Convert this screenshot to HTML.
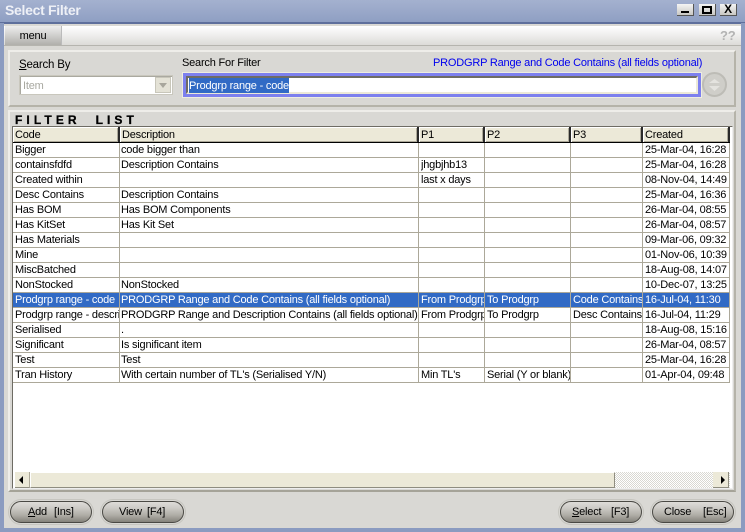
<!DOCTYPE html>
<html><head><meta charset="utf-8"><style>
*{box-sizing:border-box}
html,body{margin:0;padding:0;width:745px;height:532px;overflow:hidden;background:#d9d8d4}
body{position:relative;font-family:"Liberation Sans",sans-serif;font-size:11px;color:#000;letter-spacing:-.2px}
.a{position:absolute;white-space:nowrap}
.t{position:absolute;white-space:nowrap;overflow:hidden;height:15px;line-height:15px;transform:translateY(1px)}
.h{position:absolute;top:127px;height:15px;background:#ece9d8;border-right:2px solid #2a2a2a;box-shadow:inset 1px 1px 0 #fff,inset -1px -1px 0 #aca899;line-height:17px;padding-left:2px;white-space:nowrap;overflow:hidden}
.v{position:absolute;top:143px;height:240px;width:1px;background:#aca899}
.l{position:absolute;left:13px;width:716px;height:1px;background:#aca899}
.btn{position:absolute;top:501px;height:22px;border-radius:11px;border:1px solid #4a4944;background:linear-gradient(#dedcd8 0,#cdcbc6 30%,#b0aea7 65%,#85827b 100%);box-shadow:0 0 0 1px #d9d8d4,0 0 0 2px #c6c5bf;line-height:20px;white-space:pre}
.btn span{position:absolute;top:0}
.wb{position:absolute;top:4px;height:12px;width:17px;background:linear-gradient(#f4f4f4,#c9c8c4);border-right:1px solid #555;border-bottom:1px solid #555}
</style></head><body>
<div class="a" style="left:0;top:0;width:745px;height:532px;background:#8b9bc0"></div>
<div class="a" style="left:0;top:0;width:745px;height:22px;background:linear-gradient(#a4b1cf,#8f9fc3)"></div>
<div class="a" style="left:0;top:22px;width:745px;height:1px;background:#5e6f9c"></div>
<div class="a" style="left:4px;top:23px;width:737px;height:1px;background:#5e6f9c"></div>
<div class="a" style="left:5px;top:3px;font-size:14px;font-weight:bold;color:#eef0f6;line-height:15px;letter-spacing:-.3px">Select Filter</div>
<div class="wb" style="left:677px"><div class="a" style="left:4px;top:7px;width:8px;height:2px;background:#000"></div></div>
<div class="wb" style="left:699px"><div class="a" style="left:3px;top:2px;width:10px;height:8px;border:2px solid #000;border-top-width:2px"></div></div>
<div class="wb" style="left:720px;font-weight:bold;font-size:12px;line-height:11px;text-align:center">X</div>

<div class="a" style="left:4px;top:24px;width:737px;height:504px;background:#d9d8d4"></div>
<div class="a" style="left:4px;top:26px;width:737px;height:20px;background:linear-gradient(#fff,#dcdbd8);border-bottom:1px solid #b5b4ae"></div>
<div class="a" style="left:5px;top:26px;width:57px;height:19px;background:linear-gradient(#eee,#b0afab);text-align:center;line-height:20px;border-right:1px solid #bbb">menu</div>
<div class="a" style="left:720px;top:27px;font-size:13px;font-weight:bold;color:#b3b3b3;line-height:17px">??</div>

<div class="a" style="left:8px;top:50px;width:728px;height:57px;border:2px solid #eeede9;border-right-color:#b5b3a9;border-bottom-color:#b5b3a9"></div>
<div class="a" style="left:19px;top:58px;line-height:14px;font-size:11.5px"><u>S</u>earch By</div>
<div class="a" style="left:19px;top:75px;width:154px;height:20px;background:#fff;border:1px solid #c9c7bd;box-shadow:inset 1px 1px 0 #aaa9a0;color:#a8a8a0;padding-left:3px;line-height:20px">Item</div>
<div class="a" style="left:155px;top:77px;width:16px;height:16px;background:#e4e2d6;border:1px solid #c8c6ba"><div class="a" style="left:3px;top:5px;width:0;height:0;border:4px solid transparent;border-top:5px solid #a8a69c;border-bottom:0"></div></div>
<div class="a" style="left:182px;top:56px;line-height:14px">Search For Filter</div>
<div class="a" style="left:433px;top:56px;line-height:14px;color:#0000ee">PRODGRP Range and Code Contains (all fields optional)</div>
<div class="a" style="left:183px;top:73px;width:518px;height:24px;background:#fff;border:3px solid #7d80ee;outline:1px solid #eeede0"></div>
<div class="a" style="left:186px;top:76px;width:512px;height:18px;background:#fff;border-top:2px solid #6e6c64;border-left:2px solid #6e6c64;border-right:2px solid #ece9d8;border-bottom:2px solid #ece9d8"></div>
<div class="a" style="left:189px;top:78px;width:100px;height:15px;background:#316ac5;color:#fff;line-height:16px">Prodgrp range - code</div>
<div class="a" style="left:702px;top:72px;width:25px;height:25px;border-radius:50%;background:#cfcec9;border:2px solid #bdbcb6"></div>
<svg class="a" style="left:702px;top:72px" width="25" height="25"><path d="M7 11 L12.5 7 L18 11Z M7 14 L12.5 19 L18 14Z" fill="#e4e3df"/></svg>

<div class="a" style="left:8px;top:110px;width:728px;height:382px;border:2px solid #eeede9;border-right-color:#b5b3a9;border-bottom-color:#a5a398"></div>
<div class="a" style="left:15px;top:113px;font-size:12px;font-weight:bold;letter-spacing:4.1px;line-height:14px;white-space:pre;-webkit-text-stroke:.3px #000">FILTER  LIST</div>

<div class="a" style="left:12px;top:126px;width:721px;height:363px;background:#fff;border:1px solid #6e6c64;border-right-color:#eee;border-bottom-color:#eee"></div>
<div class="h" style="left:13px;width:107px">Code</div>
<div class="h" style="left:120px;width:299px">Description</div>
<div class="h" style="left:419px;width:66px">P1</div>
<div class="h" style="left:485px;width:86px">P2</div>
<div class="h" style="left:571px;width:72px">P3</div>
<div class="h" style="left:643px;width:87px">Created</div>
<div class="a" style="left:13px;top:142px;width:717px;height:1px;background:#000"></div>

<div class="a" style="left:13px;top:293px;width:717px;height:15px;background:#316ac5"></div>
<div class="v" style="left:119px"></div><div class="v" style="left:418px"></div><div class="v" style="left:484px"></div><div class="v" style="left:570px"></div><div class="v" style="left:642px"></div><div class="v" style="left:729px"></div>
<div class="l" style="top:157px"></div><div class="l" style="top:172px"></div><div class="l" style="top:187px"></div><div class="l" style="top:202px"></div><div class="l" style="top:217px"></div><div class="l" style="top:232px"></div><div class="l" style="top:247px"></div><div class="l" style="top:262px"></div><div class="l" style="top:277px"></div><div class="l" style="top:292px"></div><div class="l" style="top:307px"></div><div class="l" style="top:322px"></div><div class="l" style="top:337px"></div><div class="l" style="top:352px"></div><div class="l" style="top:367px"></div><div class="l" style="top:382px"></div>

<div class="t" style="left:15px;top:142px;width:104px">Bigger</div><div class="t" style="left:121px;top:142px;width:297px">code bigger than</div><div class="t" style="left:645px;top:142px;width:84px">25-Mar-04, 16:28</div>
<div class="t" style="left:15px;top:157px;width:104px">containsfdfd</div><div class="t" style="left:121px;top:157px;width:297px">Description Contains</div><div class="t" style="left:421px;top:157px;width:63px">jhgbjhb13</div><div class="t" style="left:645px;top:157px;width:84px">25-Mar-04, 16:28</div>
<div class="t" style="left:15px;top:172px;width:104px">Created within</div><div class="t" style="left:421px;top:172px;width:63px">last x days</div><div class="t" style="left:645px;top:172px;width:84px">08-Nov-04, 14:49</div>
<div class="t" style="left:15px;top:187px;width:104px">Desc Contains</div><div class="t" style="left:121px;top:187px;width:297px">Description Contains</div><div class="t" style="left:645px;top:187px;width:84px">25-Mar-04, 16:36</div>
<div class="t" style="left:15px;top:202px;width:104px">Has BOM</div><div class="t" style="left:121px;top:202px;width:297px">Has BOM Components</div><div class="t" style="left:645px;top:202px;width:84px">26-Mar-04, 08:55</div>
<div class="t" style="left:15px;top:217px;width:104px">Has KitSet</div><div class="t" style="left:121px;top:217px;width:297px">Has Kit Set</div><div class="t" style="left:645px;top:217px;width:84px">26-Mar-04, 08:57</div>
<div class="t" style="left:15px;top:232px;width:104px">Has Materials</div><div class="t" style="left:645px;top:232px;width:84px">09-Mar-06, 09:32</div>
<div class="t" style="left:15px;top:247px;width:104px">Mine</div><div class="t" style="left:645px;top:247px;width:84px">01-Nov-06, 10:39</div>
<div class="t" style="left:15px;top:262px;width:104px">MiscBatched</div><div class="t" style="left:645px;top:262px;width:84px">18-Aug-08, 14:07</div>
<div class="t" style="left:15px;top:277px;width:104px">NonStocked</div><div class="t" style="left:121px;top:277px;width:297px">NonStocked</div><div class="t" style="left:645px;top:277px;width:84px">10-Dec-07, 13:25</div>
<div style="color:#fff"><div class="t" style="left:15px;top:292px;width:104px">Prodgrp range - code</div><div class="t" style="left:121px;top:292px;width:297px">PRODGRP Range and Code Contains (all fields optional)</div><div class="t" style="left:421px;top:292px;width:63px">From Prodgrp</div><div class="t" style="left:487px;top:292px;width:83px">To Prodgrp</div><div class="t" style="left:573px;top:292px;width:69px">Code Contains</div><div class="t" style="left:645px;top:292px;width:84px">16-Jul-04, 11:30</div></div>
<div class="t" style="left:15px;top:307px;width:104px">Prodgrp range - description</div><div class="t" style="left:121px;top:307px;width:297px">PRODGRP Range and Description Contains (all fields optional)</div><div class="t" style="left:421px;top:307px;width:63px">From Prodgrp</div><div class="t" style="left:487px;top:307px;width:83px">To Prodgrp</div><div class="t" style="left:573px;top:307px;width:69px">Desc Contains</div><div class="t" style="left:645px;top:307px;width:84px">16-Jul-04, 11:29</div>
<div class="t" style="left:15px;top:322px;width:104px">Serialised</div><div class="t" style="left:121px;top:322px;width:297px">.</div><div class="t" style="left:645px;top:322px;width:84px">18-Aug-08, 15:16</div>
<div class="t" style="left:15px;top:337px;width:104px">Significant</div><div class="t" style="left:121px;top:337px;width:297px">Is significant item</div><div class="t" style="left:645px;top:337px;width:84px">26-Mar-04, 08:57</div>
<div class="t" style="left:15px;top:352px;width:104px">Test</div><div class="t" style="left:121px;top:352px;width:297px">Test</div><div class="t" style="left:645px;top:352px;width:84px">25-Mar-04, 16:28</div>
<div class="t" style="left:15px;top:367px;width:104px">Tran History</div><div class="t" style="left:121px;top:367px;width:297px">With certain number of TL's (Serialised Y/N)</div><div class="t" style="left:421px;top:367px;width:63px">Min TL's</div><div class="t" style="left:487px;top:367px;width:83px">Serial (Y or blank)</div><div class="t" style="left:645px;top:367px;width:84px">01-Apr-04, 09:48</div>

<div class="a" style="left:15px;top:472px;width:715px;height:16px;background:repeating-conic-gradient(#d9d8d2 0 25%,#fff 0 50%) 0 0/2px 2px"></div>
<div class="a" style="left:15px;top:472px;width:15px;height:16px;background:#ece9d8;border-right:1px solid #aca899;border-bottom:1px solid #8f8d80"></div>
<div class="a" style="left:19px;top:476px;width:0;height:0;border:4px solid transparent;border-right:4px solid #000;border-left:0"></div>
<div class="a" style="left:30px;top:472px;width:585px;height:16px;background:#ece9d8;border-left:1px solid #fff;border-top:1px solid #fff;border-right:1px solid #8f8d80;border-bottom:1px solid #8f8d80"></div>
<div class="a" style="left:713px;top:472px;width:16px;height:16px;background:#ece9d8;border-right:1px solid #8f8d80;border-bottom:1px solid #8f8d80"></div>
<div class="a" style="left:721px;top:476px;width:0;height:0;border:4px solid transparent;border-left:4px solid #000;border-right:0"></div>

<div class="btn" style="left:10px;width:82px"><span style="left:17px"><u>A</u>dd</span><span style="left:43px">[Ins]</span></div>
<div class="btn" style="left:102px;width:82px"><span style="left:16px">View</span><span style="left:44px">[F4]</span></div>
<div class="btn" style="left:560px;width:82px"><span style="left:11px"><u>S</u>elect</span><span style="left:50px">[F3]</span></div>
<div class="btn" style="left:652px;width:82px"><span style="left:11px">Close</span><span style="left:50px">[Esc]</span></div>
</body></html>
